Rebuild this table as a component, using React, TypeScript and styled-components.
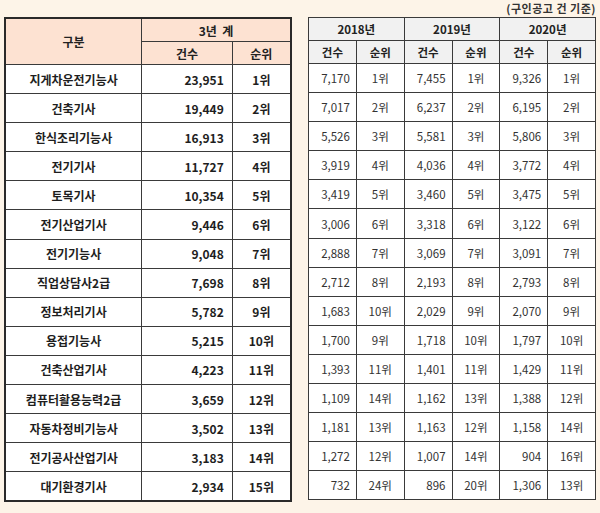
import styled, { createGlobalStyle } from "styled-components";

const GlobalStyle = createGlobalStyle`
  html, body {
    margin: 0;
    padding: 0;
    background: #fdf4e8;
  }
  body {
    font-family: "Noto Sans CJK KR", "Noto Sans", sans-serif;
    color: #222;
  }
`;

interface Row {
  name: string;
  total: string;
  rank: string;
  years: [string, string][];
}

const rows: Row[] = [
  { name: "지게차운전기능사", total: "23,951", rank: "1위", years: [["7,170", "1위"], ["7,455", "1위"], ["9,326", "1위"]] },
  { name: "건축기사", total: "19,449", rank: "2위", years: [["7,017", "2위"], ["6,237", "2위"], ["6,195", "2위"]] },
  { name: "한식조리기능사", total: "16,913", rank: "3위", years: [["5,526", "3위"], ["5,581", "3위"], ["5,806", "3위"]] },
  { name: "전기기사", total: "11,727", rank: "4위", years: [["3,919", "4위"], ["4,036", "4위"], ["3,772", "4위"]] },
  { name: "토목기사", total: "10,354", rank: "5위", years: [["3,419", "5위"], ["3,460", "5위"], ["3,475", "5위"]] },
  { name: "전기산업기사", total: "9,446", rank: "6위", years: [["3,006", "6위"], ["3,318", "6위"], ["3,122", "6위"]] },
  { name: "전기기능사", total: "9,048", rank: "7위", years: [["2,888", "7위"], ["3,069", "7위"], ["3,091", "7위"]] },
  { name: "직업상담사2급", total: "7,698", rank: "8위", years: [["2,712", "8위"], ["2,193", "8위"], ["2,793", "8위"]] },
  { name: "정보처리기사", total: "5,782", rank: "9위", years: [["1,683", "10위"], ["2,029", "9위"], ["2,070", "9위"]] },
  { name: "용접기능사", total: "5,215", rank: "10위", years: [["1,700", "9위"], ["1,718", "10위"], ["1,797", "10위"]] },
  { name: "건축산업기사", total: "4,223", rank: "11위", years: [["1,393", "11위"], ["1,401", "11위"], ["1,429", "11위"]] },
  { name: "컴퓨터활용능력2급", total: "3,659", rank: "12위", years: [["1,109", "14위"], ["1,162", "13위"], ["1,388", "12위"]] },
  { name: "자동차정비기능사", total: "3,502", rank: "13위", years: [["1,181", "13위"], ["1,163", "12위"], ["1,158", "14위"]] },
  { name: "전기공사산업기사", total: "3,183", rank: "14위", years: [["1,272", "12위"], ["1,007", "14위"], ["904", "16위"]] },
  { name: "대기환경기사", total: "2,934", rank: "15위", years: [["732", "24위"], ["896", "20위"], ["1,306", "13위"]] },
];

const Page = styled.div`
  width: 600px;
  height: 513px;
  padding: 0 4px;
  box-sizing: border-box;
`;

const Caption = styled.div`
  height: 17px;
  text-align: right;
  font-size: 11px;
  font-weight: 700;
  line-height: 16px;
  letter-spacing: 0.5px;
  color: #333;
`;

const Tables = styled.div`
  display: flex;
  gap: 16px;
  align-items: flex-start;
`;

const Table = styled.table<{ $main?: boolean }>`
  border-collapse: collapse;
  table-layout: fixed;
  background: #fff;
  border: ${(p) => (p.$main ? "2px solid #2a2a2a" : "1.5px solid #444")};
  font-size: ${(p) => (p.$main ? "12px" : "11.5px")};
  font-weight: ${(p) => (p.$main ? 700 : 400)};
  color: ${(p) => (p.$main ? "#1e1e1e" : "#333")};
`;

const Head = styled.th<{ $main?: boolean; $h: number }>`
  height: ${(p) => p.$h}px;
  padding: 0;
  border: 1px solid #3a3a3a;
  background: ${(p) => (p.$main ? "#fde2d2" : "#f1f1f1")};
  font-weight: 700;
  text-align: center;
  color: #222;
`;

const Cell = styled.td<{ $align?: "left" | "right" | "center"; $pad?: number }>`
  height: 28.1px;
  padding: 0 ${(p) => p.$pad ?? 0}px 0 0;
  border: 1px solid #3a3a3a;
  text-align: ${(p) => p.$align ?? "center"};
  white-space: nowrap;
`;

function MainTable() {
  return (
    <Table $main>
      <colgroup>
        <col style={{ width: 137 }} />
        <col style={{ width: 91 }} />
        <col style={{ width: 59 }} />
      </colgroup>
      <thead>
        <tr>
          <Head $main $h={22} rowSpan={2}>구분</Head>
          <Head $main $h={22} colSpan={2}>3년&nbsp;&nbsp;계</Head>
        </tr>
        <tr>
          <Head $main $h={22}>건수</Head>
          <Head $main $h={22}>순위</Head>
        </tr>
      </thead>
      <tbody>
        {rows.map((r) => (
          <tr key={r.name}>
            <Cell>{r.name}</Cell>
            <Cell $align="right" $pad={8}>{r.total}</Cell>
            <Cell>{r.rank}</Cell>
          </tr>
        ))}
      </tbody>
    </Table>
  );
}

function YearTable() {
  return (
    <Table>
      <colgroup>
        {Array.from({ length: 6 }).map((_, i) => (
          <col key={i} style={{ width: 48 }} />
        ))}
      </colgroup>
      <thead>
        <tr>
          {["2018년", "2019년", "2020년"].map((y) => (
            <Head key={y} $h={22} colSpan={2}>{y}</Head>
          ))}
        </tr>
        <tr>
          {[0, 1, 2].map((i) => [
            <Head key={`c${i}`} $h={22}>건수</Head>,
            <Head key={`r${i}`} $h={22}>순위</Head>,
          ])}
        </tr>
      </thead>
      <tbody>
        {rows.map((r) => (
          <tr key={r.name}>
            {r.years.map(([count, rank], i) => [
              <Cell key={`c${i}`} $align="right" $pad={6}>{count}</Cell>,
              <Cell key={`r${i}`}>{rank}</Cell>,
            ])}
          </tr>
        ))}
      </tbody>
    </Table>
  );
}

export default function App() {
  return (
    <>
      <GlobalStyle />
      <Page>
        <Caption>(구인공고 건 기준)</Caption>
        <Tables>
          <MainTable />
          <YearTable />
        </Tables>
      </Page>
    </>
  );
}
